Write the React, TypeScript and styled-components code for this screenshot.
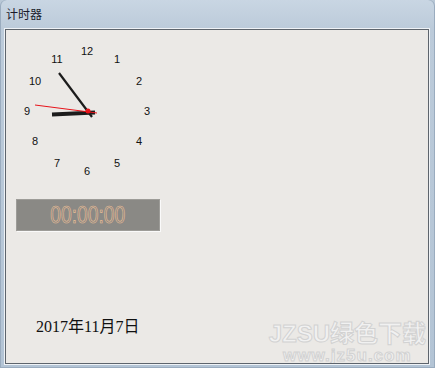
import React from 'react';
import styled, { createGlobalStyle } from 'styled-components';

const GlobalStyle = createGlobalStyle`
  html, body {
    margin: 0;
    padding: 0;
    background: #b9c8d7;
  }
`;

const Window = styled.div`
  width: 435px;
  height: 368px;
  box-sizing: border-box;
  display: flex;
  flex-direction: column;
  padding: 0 6px 4px 5px;
  border-radius: 6px 6px 0 0;
  background: linear-gradient(180deg, #c9d6e3 0px, #bccbda 28px, #b3c4d5 100%);
  box-shadow: inset 1px 0 0 #9aacbf, inset -1px 0 0 #9aacbf, inset 0 -1px 0 #9aacbf;
  font-family: 'Noto Sans CJK SC', 'Liberation Sans', sans-serif;
`;

const TitleBar = styled.div`
  height: 29px;
  flex: none;
  display: flex;
  align-items: center;
  padding-left: 1px;
  padding-bottom: 3px;
  box-sizing: border-box;
  font-size: 12px;
  color: #1a1a2a;
`;

const Client = styled.div`
  position: relative;
  flex: 1;
  display: flex;
  flex-direction: column;
  align-items: flex-start;
  padding: 11px 0 0 6px;
  border: 1px solid #5d646c;
  box-shadow: 0 0 0 1px #eef2f6;
  background: #ebe9e6;
  overflow: hidden;
`;

const ClockFace = styled.svg`
  display: block;
  flex: none;
`;

const Display = styled.div`
  margin: 13px 0 0 4px;
  width: 142px;
  height: 30px;
  display: flex;
  align-items: center;
  justify-content: center;
  background: #8a8985;
  border: 1px solid #9d9c98;
  box-shadow: 1px 1px 0 #fafafa;
`;

const Digits = styled.span`
  display: inline-block;
  font-family: 'Liberation Sans', sans-serif;
  font-size: 24px;
  line-height: 24px;
  color: transparent;
  -webkit-text-stroke: 0.7px #ecbf95;
  transform: scaleX(0.8);
`;

const DateLabel = styled.div`
  margin: 88px 0 0 24px;
  font-family: 'Liberation Serif', 'Noto Sans CJK SC', serif;
  font-size: 16px;
  line-height: 16px;
  color: #111;
`;

const Watermark = styled.div`
  position: absolute;
  right: 2px;
  bottom: -2px;
  display: flex;
  flex-direction: column;
  align-items: center;
  font-family: 'Liberation Sans', 'Noto Sans CJK SC', sans-serif;
  font-weight: bold;
  white-space: nowrap;
  color: #f1f1f1;
  -webkit-text-stroke: 1px #d2d2d2;
  pointer-events: none;
`;

const WatermarkMain = styled.span`
  font-size: 24px;
  line-height: 27px;
`;

const WatermarkUrl = styled.span`
  font-size: 17px;
  line-height: 18px;
  letter-spacing: 1px;
`;

const CX = 76;
const CY = 70;
const R = 60;

const numbers = [12, 1, 2, 3, 4, 5, 6, 7, 8, 9, 10, 11];

const Clock: React.FC = () => (
  <ClockFace width={150} height={145} viewBox="0 0 150 145">
    {numbers.map((n, i) => {
      const a = (i * Math.PI) / 6;
      const x = CX - 1 + R * Math.sin(a);
      const y = CY - R * Math.cos(a);
      return (
        <text
          key={n}
          x={x}
          y={y}
          textAnchor="middle"
          dominantBaseline="central"
          fontFamily="'Liberation Sans', sans-serif"
          fontSize={11}
          fill="#111"
        >
          {n}
        </text>
      );
    })}
    {/* hour hand */}
    <line x1={40} y1={73.5} x2={83} y2={71.5} stroke="#1c1c1c" strokeWidth={4} />
    {/* minute hand */}
    <line x1={47} y1={32} x2={80} y2={76} stroke="#1c1c1c" strokeWidth={2.2} />
    {/* second hand */}
    <line x1={23} y1={64} x2={85} y2={72} stroke="#e8141b" strokeWidth={1} />
    <circle cx={CX} cy={CY} r={2.5} fill="#e8141b" />
  </ClockFace>
);

const App: React.FC = () => (
  <>
    <GlobalStyle />
    <Window>
      <TitleBar>计时器</TitleBar>
      <Client>
        <Clock />
        <Display>
          <Digits>00:00:00</Digits>
        </Display>
        <DateLabel>2017年11月7日</DateLabel>
        <Watermark>
          <WatermarkMain>JZSU绿色下载</WatermarkMain>
          <WatermarkUrl>www.jz5u.com</WatermarkUrl>
        </Watermark>
      </Client>
    </Window>
  </>
);

export default App;
